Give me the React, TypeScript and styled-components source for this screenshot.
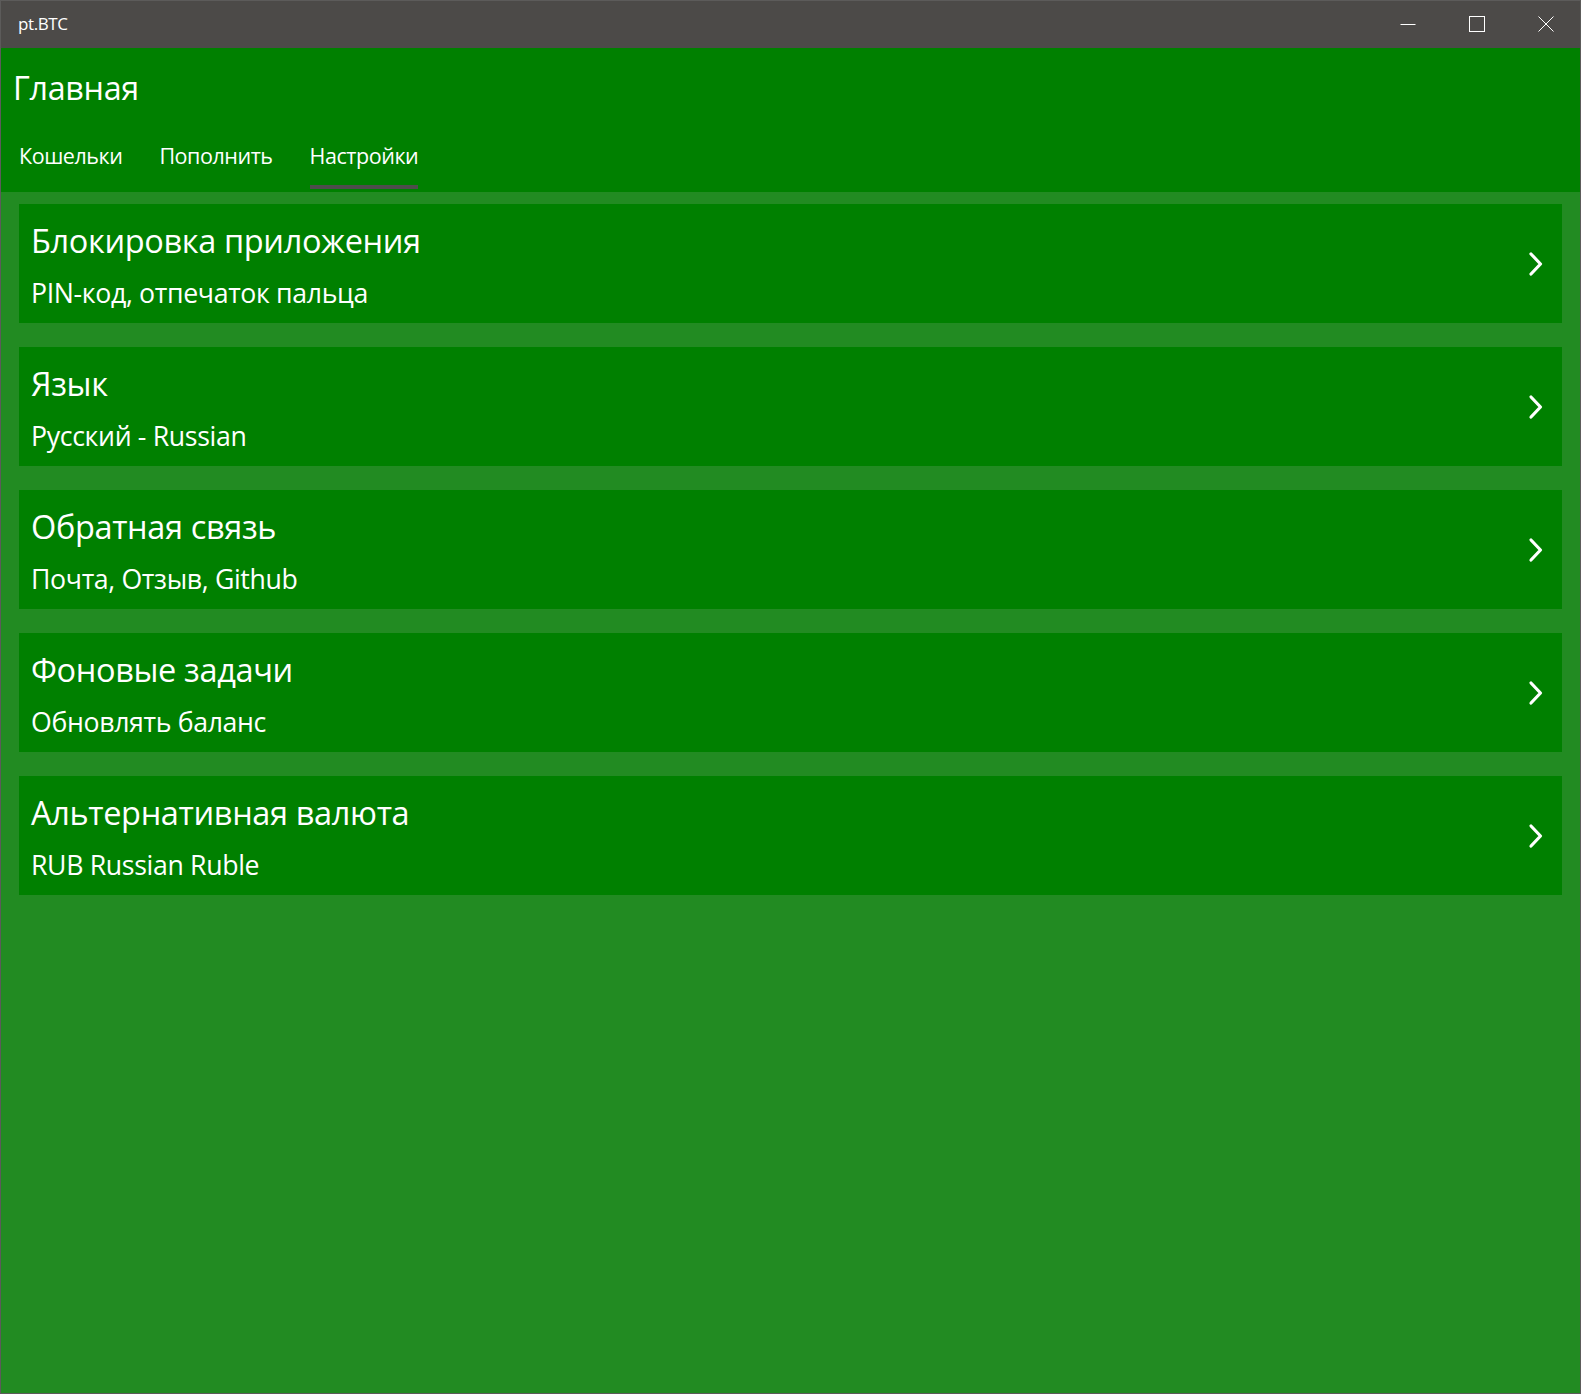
import React from "react";
import styled, { createGlobalStyle } from "styled-components";

const Global = createGlobalStyle`
  html, body { margin: 0; padding: 0; background: #228b22; }
  * { box-sizing: border-box; }
`;

const Window = styled.div`
  width: 1581px;
  height: 1394px;
  border: 1px solid #5c5b5a;
  background: #228b22;
  display: flex;
  flex-direction: column;
  font-family: "Open Sans", "Noto Sans", sans-serif;
  color: #ffffff;
  overflow: hidden;
`;

const TitleBar = styled.div`
  height: 47px;
  background: #4c4a48;
  display: flex;
  align-items: center;
  flex-shrink: 0;
`;

const AppName = styled.div`
  flex: 1;
  padding-left: 17px;
  padding-bottom: 2px;
  font-size: 17px;
  letter-spacing: -0.4px;
  color: #ffffff;
`;

const CaptionButton = styled.div`
  width: 69px;
  height: 47px;
  display: flex;
  align-items: center;
  justify-content: center;
  margin-bottom: 1px;
`;

const Header = styled.div`
  height: 144px;
  background: #008000;
  display: flex;
  flex-direction: column;
  flex-shrink: 0;
`;

const PageTitle = styled.div`
  padding: 16px 0 0 12px;
  height: 70px;
  font-size: 32.3px;
  line-height: 46px;
  letter-spacing: -0.3px;
`;

const Tabs = styled.div`
  display: flex;
  padding-left: 18px;
  height: 74px;
`;

const Tab = styled.div<{ $active?: boolean }>`
  margin-right: 37px;
  padding-top: 17px;
  font-size: 21.5px;
  line-height: 42px;
  letter-spacing: -0.45px;
  display: flex;
  flex-direction: column;
  align-items: stretch;
  &::after {
    content: "";
    display: block;
    margin-top: 8px;
    height: 4px;
    background: ${(p) => (p.$active ? "#4e4d4b" : "transparent")};
  }
`;

const Content = styled.div`
  flex: 1;
  padding: 12px 18px 0 18px;
  display: flex;
  flex-direction: column;
  gap: 24px;
`;

const Card = styled.div`
  height: 119px;
  background: #008000;
  display: flex;
  align-items: center;
  padding: 0 17px 0 12px;
`;

const CardText = styled.div`
  flex: 1;
  display: flex;
  flex-direction: column;
  padding: 4px 0 2px 0;
`;

const CardTitle = styled.div`
  font-size: 32.5px;
  line-height: 48px;
  letter-spacing: -0.35px;
`;

const CardSubtitle = styled.div`
  font-size: 26.7px;
  line-height: 40px;
  letter-spacing: -0.35px;
  margin-top: 8px;
`;

const Chevron = () => (
  <svg width="18" height="26" viewBox="0 0 18 26">
    <path d="M4 3 L13.5 13 L4 23" fill="none" stroke="#ffffff" strokeWidth="3.2" strokeLinecap="round" strokeLinejoin="round" />
  </svg>
);

const items = [
  { title: "Блокировка приложения", sub: "PIN-код, отпечаток пальца" },
  { title: "Язык", sub: "Русский - Russian" },
  { title: "Обратная связь", sub: "Почта, Отзыв, Github" },
  { title: "Фоновые задачи", sub: "Обновлять баланс" },
  { title: "Альтернативная валюта", sub: "RUB Russian Ruble" },
];

export default function App() {
  return (
    <>
      <Global />
      <Window>
        <TitleBar>
          <AppName>pt.BTC</AppName>
          <CaptionButton>
            <svg width="16" height="16" viewBox="0 0 16 16">
              <path d="M0.5 8.5 H15.5" stroke="#fff" strokeWidth="1" />
            </svg>
          </CaptionButton>
          <CaptionButton>
            <svg width="16" height="16" viewBox="0 0 16 16">
              <rect x="0.5" y="0.5" width="15" height="15" fill="none" stroke="#fff" strokeWidth="1" />
            </svg>
          </CaptionButton>
          <CaptionButton>
            <svg width="16" height="16" viewBox="0 0 16 16">
              <path d="M0.5 0.5 L15.5 15.5 M15.5 0.5 L0.5 15.5" stroke="#fff" strokeWidth="1" />
            </svg>
          </CaptionButton>
        </TitleBar>
        <Header>
          <PageTitle>Главная</PageTitle>
          <Tabs>
            <Tab>Кошельки</Tab>
            <Tab>Пополнить</Tab>
            <Tab $active>Настройки</Tab>
          </Tabs>
        </Header>
        <Content>
          {items.map((it) => (
            <Card key={it.title}>
              <CardText>
                <CardTitle>{it.title}</CardTitle>
                <CardSubtitle>{it.sub}</CardSubtitle>
              </CardText>
              <Chevron />
            </Card>
          ))}
        </Content>
      </Window>
    </>
  );
}
